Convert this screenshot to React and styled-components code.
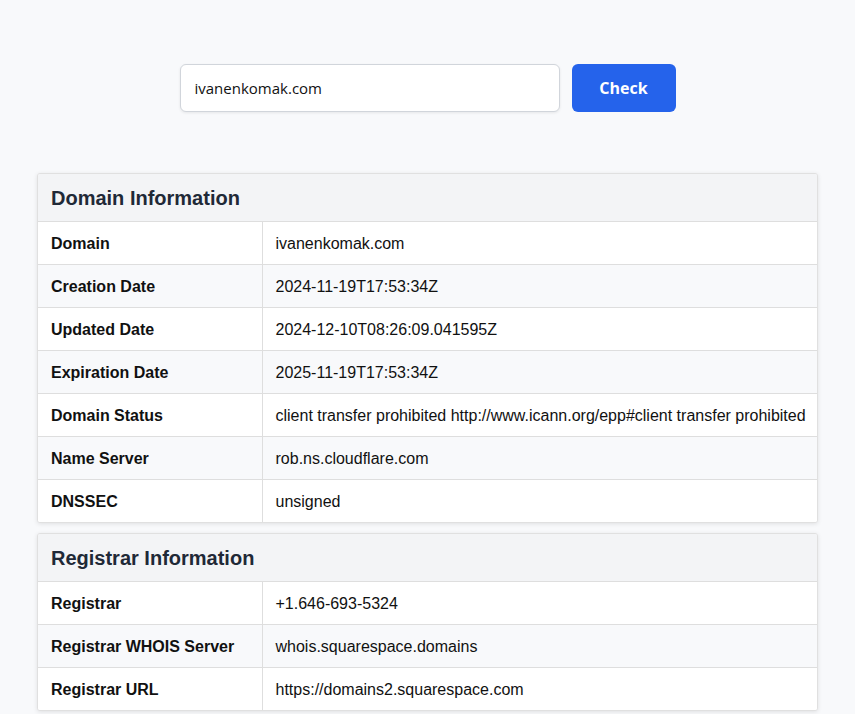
import React, { useState } from "react";
import styled, { createGlobalStyle } from "styled-components";

const GlobalStyle = createGlobalStyle`
  * { box-sizing: border-box; }
  body {
    margin: 0;
    background: #f8f9fb;
    font-family: "Liberation Sans", Arial, sans-serif;
    color: #111;
  }
`;

const Page = styled.div`
  padding: 64px 37px 40px;
`;

const SearchForm = styled.form`
  display: flex;
  justify-content: center;
  gap: 12px;
  margin-bottom: 61px;
`;

const Input = styled.input`
  width: 380px;
  height: 48px;
  padding: 0 14px;
  border: 1px solid #d1d5db;
  border-radius: 6px;
  background: #fff;
  font-family: "Open Sans", "Noto Sans", sans-serif;
  font-size: 15px;
  color: #111;
  box-shadow: 0 1px 3px rgba(0, 0, 0, 0.08);
  outline: none;
`;

const Button = styled.button`
  width: 104px;
  height: 48px;
  border: none;
  border-radius: 6px;
  background: #2563eb;
  color: #fff;
  font-family: "Open Sans", "Noto Sans", sans-serif;
  font-weight: 700;
  font-size: 16px;
  cursor: pointer;
`;

const Card = styled.section`
  background: #fff;
  border: 1px solid #e0e0e0;
  border-radius: 3px;
  box-shadow: 0 1px 4px rgba(0, 0, 0, 0.1);
  margin-bottom: 10px;
  overflow: hidden;
`;

const CardTitle = styled.h2`
  margin: 0;
  height: 47px;
  display: flex;
  align-items: center;
  padding: 1px 13px 0;
  background: #f3f4f6;
  font-size: 20px;
  font-weight: 700;
  color: #1f2937;
`;

const Table = styled.table`
  width: 100%;
  border-collapse: collapse;
  table-layout: fixed;
`;

const Row = styled.tr`
  background: ${(props) => (props.$striped ? "#f8f9fb" : "#fff")};
`;

const Key = styled.th`
  width: 224px;
  text-align: left;
  padding: 13px 13px 11px;
  font-size: 16px;
  font-weight: 700;
  border-top: 1px solid #dedede;
  border-right: 1px solid #dedede;
`;

const Value = styled.td`
  padding: 13px 10px 11px 13px;
  font-size: 16px;
  white-space: nowrap;
  border-top: 1px solid #dedede;
`;

const sections = [
  {
    title: "Domain Information",
    rows: [
      ["Domain", "ivanenkomak.com"],
      ["Creation Date", "2024-11-19T17:53:34Z"],
      ["Updated Date", "2024-12-10T08:26:09.041595Z"],
      ["Expiration Date", "2025-11-19T17:53:34Z"],
      [
        "Domain Status",
        "client transfer prohibited http://www.icann.org/epp#client transfer prohibited",
      ],
      ["Name Server", "rob.ns.cloudflare.com"],
      ["DNSSEC", "unsigned"],
    ],
  },
  {
    title: "Registrar Information",
    rows: [
      ["Registrar", "+1.646-693-5324"],
      ["Registrar WHOIS Server", "whois.squarespace.domains"],
      ["Registrar URL", "https://domains2.squarespace.com"],
    ],
  },
];

export default function App() {
  const [domain, setDomain] = useState("ivanenkomak.com");

  return (
    <>
      <GlobalStyle />
      <Page>
        <SearchForm onSubmit={(e) => e.preventDefault()}>
          <Input value={domain} onChange={(e) => setDomain(e.target.value)} />
          <Button type="submit">Check</Button>
        </SearchForm>
        {sections.map((section) => (
          <Card key={section.title}>
            <CardTitle>{section.title}</CardTitle>
            <Table>
              <tbody>
                {section.rows.map(([label, value], index) => (
                  <Row key={label} $striped={index % 2 === 1}>
                    <Key>{label}</Key>
                    <Value>{value}</Value>
                  </Row>
                ))}
              </tbody>
            </Table>
          </Card>
        ))}
      </Page>
    </>
  );
}
